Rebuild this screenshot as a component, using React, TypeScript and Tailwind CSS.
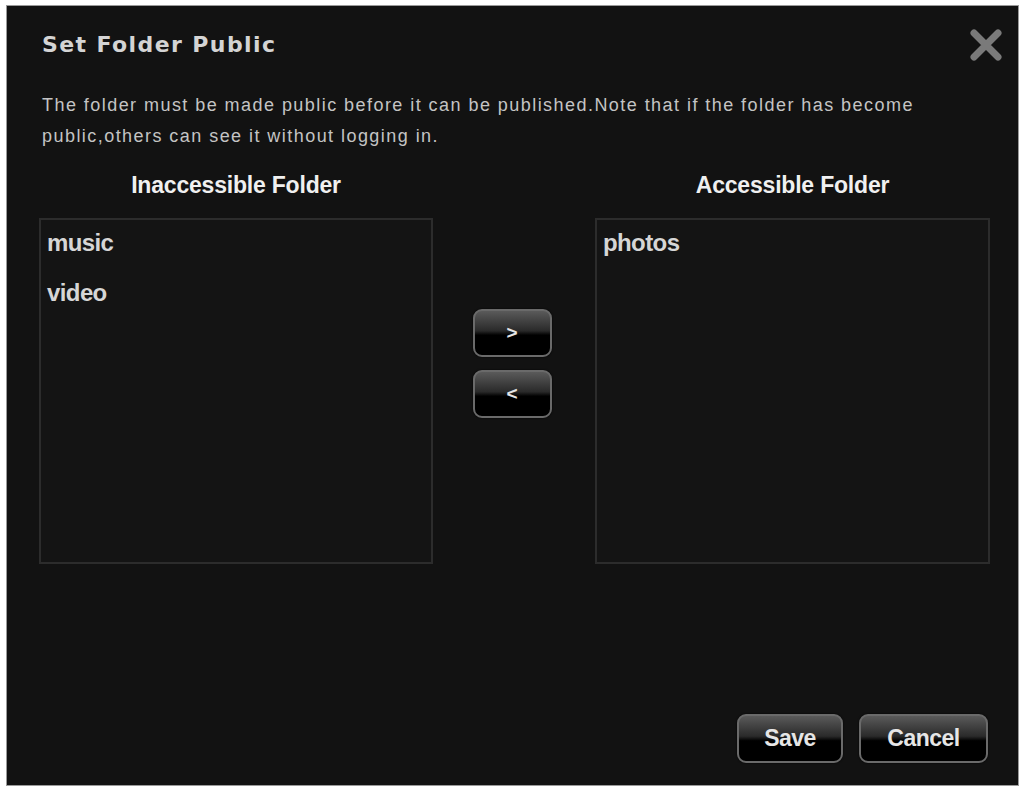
import React from "react";

function XIcon() {
  return (
    <svg width="34" height="34" viewBox="0 0 34 34">
      <path d="M5 5 L29 29 M29 5 L5 29" stroke="#7a7a7a" strokeWidth="7" strokeLinecap="round" />
    </svg>
  );
}

function GlossButton({ children, className }: { children: React.ReactNode; className: string }) {
  return (
    <button
      className={
        "flex items-center justify-center rounded-[9px] border-2 border-[#6a6a6a] bg-[linear-gradient(to_bottom,#5a5a5a_0%,#2a2a2a_45%,#000_55%,#000_100%)] text-[#e6e6e6] font-bold shadow-[0_0_2px_#000] " +
        className
      }
    >
      {children}
    </button>
  );
}

export default function App() {
  return (
    <div className="w-[1024px] h-[790px] bg-white pt-[5px] pl-[6px]" style={{ fontFamily: '"Liberation Sans", Arial, sans-serif' }}>
      <div className="w-[1013px] h-[781px] bg-[#121212] border border-[#9a9a9a] flex flex-col">
        <div className="flex items-start justify-between pl-[35px] pr-[15px] pt-[22px]">
          <h1
            className="text-[22px] font-bold tracking-[1.4px] text-[#d4d4d4] leading-[34px]"
            style={{ fontFamily: '"DejaVu Sans", Verdana, sans-serif' }}
          >
            Set Folder Public
          </h1>
          <div>
            <XIcon />
          </div>
        </div>
        <p className="pl-[35px] pr-[56px] mt-[28px] text-[18px] leading-[31px] tracking-[1.45px] text-[#c4c4c4]">
          The folder must be made public before it can be published.Note that if the folder has become public,others can see it without logging in.
        </p>
        <div className="flex pl-[32px] mt-[19px]">
          <div className="w-[394px] flex flex-col">
            <div className="text-center text-[23px] font-bold text-[#f0f0f0] leading-[28px] tracking-[-0.2px]">Inaccessible Folder</div>
            <div className="mt-[19px] h-[346px] border-2 border-[#2c2c2c] bg-[#141414] px-[6px] pt-[8px] text-[24px] font-bold text-[#d6d6d6] tracking-[-0.6px]">
              <div className="leading-[30px]">music</div>
              <div className="leading-[30px] mt-[20px]">video</div>
            </div>
          </div>
          <div className="w-[162px] flex flex-col items-center pt-[138px] gap-[13px] pr-[4px]">
            <GlossButton className="w-[79px] h-[48px] text-[19px] pt-[1px]">&gt;</GlossButton>
            <GlossButton className="w-[79px] h-[48px] text-[19px] pt-[1px]">&lt;</GlossButton>
          </div>
          <div className="w-[395px] flex flex-col">
            <div className="text-center text-[23px] font-bold text-[#f0f0f0] leading-[28px] tracking-[-0.2px]">Accessible Folder</div>
            <div className="mt-[19px] h-[346px] border-2 border-[#2c2c2c] bg-[#141414] px-[6px] pt-[8px] text-[24px] font-bold text-[#d6d6d6] tracking-[-0.6px]">
              <div className="leading-[30px]">photos</div>
            </div>
          </div>
        </div>
        <div className="mt-auto flex justify-end gap-[16px] pr-[30px] pb-[22px]">
          <GlossButton className="w-[106px] h-[49px] text-[23px] tracking-[-0.5px]">Save</GlossButton>
          <GlossButton className="w-[129px] h-[49px] text-[23px] tracking-[-0.5px]">Cancel</GlossButton>
        </div>
      </div>
    </div>
  );
}
